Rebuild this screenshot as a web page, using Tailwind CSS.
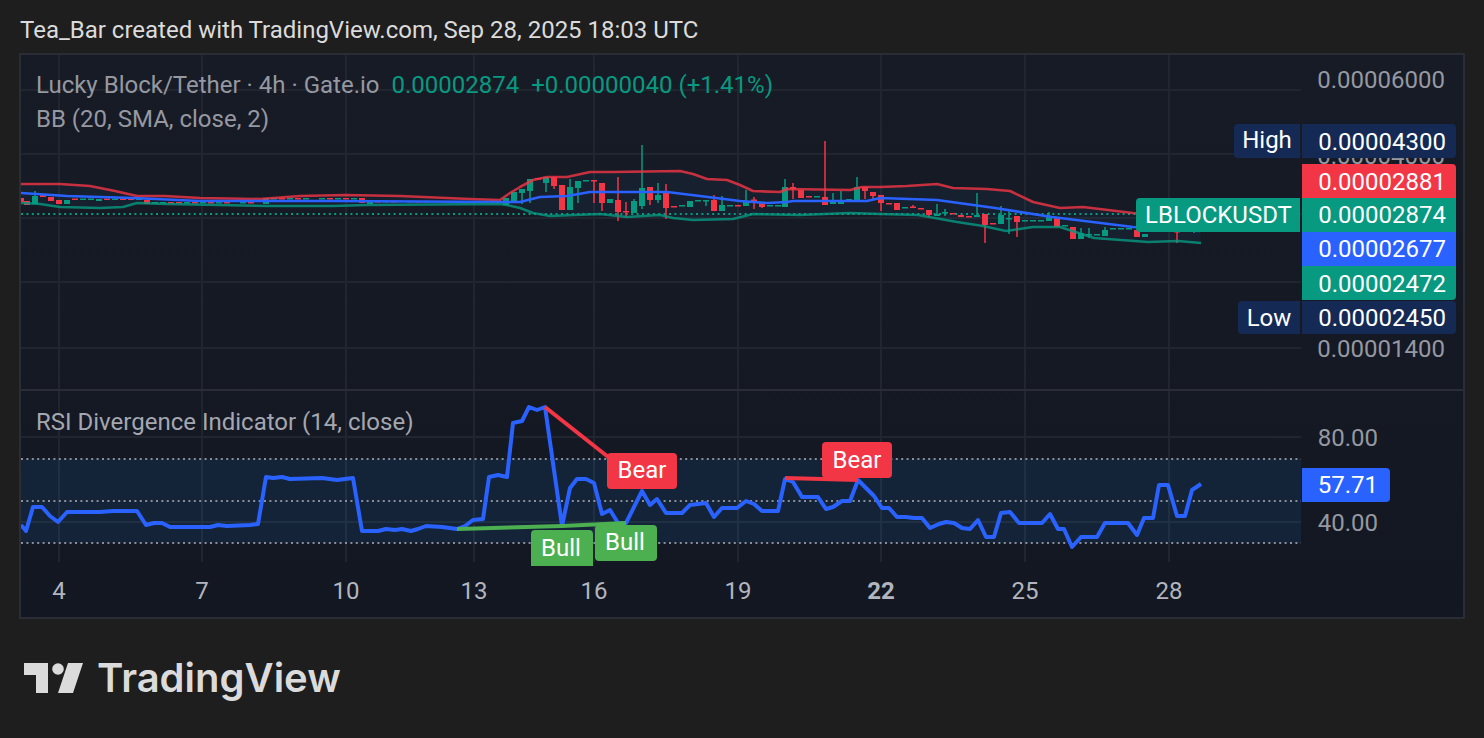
<!DOCTYPE html>
<html lang="en">
<head>
    <meta charset="utf-8"/>
    <title>LBLOCKUSDT chart</title>
    <script src="https://cdn.jsdelivr.net/npm/@tailwindcss/browser@4"></script>
</head>
<body class="bg-[#1e1e1e] w-[1484px] h-[738px] overflow-hidden font-['Roboto',sans-serif]">
    <!-- header -->
    <div class="h-[53px] pl-5 pt-[14px] text-[24px] leading-[33px] text-[#dbdbdb]">Tea_Bar created with TradingView.com, Sep 28, 2025 18:03 UTC</div>

    <!-- chart frame -->
    <div class="relative ml-[19px] w-[1446px] h-[566px] border-2 border-[#2a2d36] bg-linear-to-b from-[#171b26] to-[#131722] overflow-hidden text-[24px] leading-[34px]">
        <svg id="chart" class="absolute inset-0" width="1442" height="562" viewBox="21 55 1442 562" fill="none">
            <!-- grid -->
            <path stroke="#21252f" stroke-width="2" d="M59 55V389M202 55V389M346 55V389M474 55V389M594 55V389M738 55V389M881 55V389M1025 55V389M1169 55V389M59 391V562M202 391V562M346 391V562M474 391V562M594 391V562M738 391V562M881 391V562M1025 391V562M1169 391V562M21 90H1301M21 154H1301M21 218H1301M21 282H1301M21 348H1301M21 437H1301M21 522H1301"/>
            <path stroke="#2a2d36" stroke-width="2" d="M21 390H1463"/>
            <!-- rsi band -->
            <rect x="21" y="459" width="1280" height="84" fill="#2196f3" fill-opacity="0.1"/>
            <path stroke="#8a8e99" stroke-width="2" stroke-dasharray="2 3.4" d="M21 459H1301M21 501H1301M21 543H1301"/>
            <!-- bollinger band fill -->
            <path id="bbfill" fill="#2196f3" fill-opacity="0.05"/>
            <path stroke="#089981" stroke-width="2" stroke-dasharray="2 3.4" d="M21 214H1301"/>
            <path id="green" fill="#089981"/>
            <path id="red" fill="#f23645"/>
            <path id="bbup" stroke="#f23645" stroke-opacity="0.8" stroke-width="2.6" stroke-linejoin="round"/>
            <path id="bbmid" stroke="#2962ff" stroke-width="2.6" stroke-linejoin="round"/>
            <path id="bblow" stroke="#089981" stroke-opacity="0.8" stroke-width="2.6" stroke-linejoin="round"/>
            <!-- rsi -->
            <path id="rsi" stroke="#2962ff" stroke-width="4" stroke-linejoin="round"/>
            <path stroke="#4caf50" stroke-width="4" d="M457 529L562 526L626 523"/>
            <path stroke="#f23645" stroke-width="4" d="M545 407L612 460M785 478L858 480"/>
        </svg>

        <!-- legend -->
        <div class="absolute left-[15px] top-[13px] whitespace-nowrap text-[#9598a1]">
            <span>Lucky Block/Tether · 4h · Gate.io</span>
            <span class="ml-[6px] text-[#089981]">0.00002874</span>
            <span class="ml-[6px] text-[#089981]">+0.00000040 (+1.41%)</span>
        </div>
        <div class="absolute left-[15px] top-[47px] text-[#9598a1]">BB (20, SMA, close, 2)</div>
        <div class="absolute left-[15px] top-[350px] text-[#a4a7b0]">RSI Divergence Indicator (14, close)</div>

        <!-- divergence labels -->
        <div class="absolute left-[586px] top-[398px] w-[70px] h-[36px] rounded bg-[#f23645] text-center text-white">Bear</div>
        <div class="absolute left-[801px] top-[387px] w-[70px] h-[36px] rounded bg-[#f23645] leading-[36px] text-center text-white">Bear</div>
        <div class="absolute left-[510px] top-[475px] w-[62px] h-[36px] rounded-t bg-[#4caf50] pr-[2px] leading-[36px] text-center text-white">Bull</div>
        <div class="absolute left-[574px] top-[470px] w-[62px] h-[36px] rounded bg-[#4caf50] pr-[2px] text-center text-white">Bull</div>

        <!-- price axis -->
        <div class="absolute right-[18px] top-[8px] text-[#9598a1]">0.00006000</div>
        <div class="absolute right-[18px] top-[84px] text-[#9598a1]">0.00004000</div>
        <div class="absolute right-[18px] top-[277px] text-[#9598a1]">0.00001400</div>
        <div class="absolute left-[1213px] top-[69px] w-[66px] h-[34px] rounded-l bg-[#142a55] leading-[32px] text-center text-white">High</div>
        <div class="absolute left-[1281px] top-[69px] w-[154px] h-[34px] rounded-r bg-[#142a55] pr-[10px] leading-[36px] text-right text-white">0.00004300</div>
        <div class="absolute left-[1281px] top-[109px] w-[154px] h-[34px] rounded-tr bg-[#f23645] pr-[10px] leading-[36px] text-right text-white">0.00002881</div>
        <div class="absolute left-[1115px] top-[143px] w-[164px] h-[34px] rounded-l bg-[#089981] pl-[1px] text-center text-white">LBLOCKUSDT</div>
        <div class="absolute left-[1281px] top-[143px] w-[154px] h-[34px] bg-[#089981] pr-[10px] text-right text-white">0.00002874</div>
        <div class="absolute left-[1281px] top-[177px] w-[154px] h-[34px] bg-[#2962ff] pr-[10px] text-right text-white">0.00002677</div>
        <div class="absolute left-[1281px] top-[211px] w-[154px] h-[34px] rounded-br bg-[#089981] pr-[10px] leading-[36px] text-right text-white">0.00002472</div>
        <div class="absolute left-[1217px] top-[246px] w-[62px] h-[33px] rounded-l bg-[#142a55] text-center text-white">Low</div>
        <div class="absolute left-[1281px] top-[246px] w-[154px] h-[33px] rounded-r bg-[#142a55] pr-[10px] text-right text-white">0.00002450</div>

        <!-- rsi axis -->
        <div class="absolute right-[85px] top-[366px] text-[#9598a1]">80.00</div>
        <div class="absolute right-[85px] top-[451px] text-[#9598a1]">40.00</div>
        <div class="absolute left-[1281px] top-[413px] w-[88px] h-[34px] rounded-r bg-[#2962ff] pr-[12px] text-right text-white">57.71</div>

        <!-- time axis -->
        <div class="absolute left-0 top-[519px] w-[1442px] h-[34px] text-[#b2b5be]">
            <span class="absolute left-[38px] -translate-x-1/2">4</span>
            <span class="absolute left-[181px] -translate-x-1/2">7</span>
            <span class="absolute left-[325px] -translate-x-1/2">10</span>
            <span class="absolute left-[453px] -translate-x-1/2">13</span>
            <span class="absolute left-[573px] -translate-x-1/2">16</span>
            <span class="absolute left-[717px] -translate-x-1/2">19</span>
            <span class="absolute left-[860px] -translate-x-1/2 font-bold">22</span>
            <span class="absolute left-[1004px] -translate-x-1/2">25</span>
            <span class="absolute left-[1148px] -translate-x-1/2">28</span>
        </div>
    </div>

    <!-- footer logo -->
    <div class="flex items-center pl-6 pt-[39px] gap-[14px]">
        <svg width="59" height="30" viewBox="24 662 59 30" fill="#dbdbdb">
            <path d="M24 662H48V692H36V674H24Z"/>
            <circle cx="58" cy="668" r="5.8"/>
            <path d="M68 662H83L73 692H58Z"/>
        </svg>
        <span class="font-['Inter',sans-serif] font-semibold text-[40px] leading-[40px] text-[#dbdbdb]">TradingView</span>
    </div>

    <script>
        // [x, body top, body bottom, wick top, wick bottom]
        const greens = [[35,196,204,191,204],[67,200,204],[83,198.5,200],[91,198.5,200],[99,199,201],[115,198.5,200],[139,198.5,200],[155,202,203.5],[163,202,203.5],[187,202,203.5],[203,202,203.5],[219,202,203.5],[243,202,203.5],[266,198,204],[274,198,199.5],[290,198,199.5],[306,198,199.5],[322,198,199.5],[338,198,199.5],[354,198,199.5],[370,201,204],[386,201,202.5],[410,201,202.5],[426,201,202.5],[450,201,202.5],[466,201,202.5],[490,201,202.5],[506,198,205],[514,192,201],[522,189,193,189,204],[530,179,191,179,203],[546,177,183,177,192],[570,187,210,179,210],[578,181,188,181,203],[586,180,181.5],[610,199,203],[634,201,213,199,213],[642,188,206,145,209],[658,195,200,183,203],[682,205,206.5],[690,201,207],[698,200,201.5],[706,200,201.5,200,206],[722,205,211,196,211],[730,205,206.5],[746,201,206,190,206],[770,205,206.5],[778,205,206.5],[785,187,207,179,207],[817,196,197.5],[833,202,204,193,204],[841,201,204,191,204],[849,199,200.5],[857,187,202,177,202],[905,207,208.5],[937,214,216,204,216],[945,212,213.5,209,216],[977,215,217,193,217],[1001,215,224,206,224],[1009,218,219.5,210,234],[1025,220,221.5],[1033,220,221.5],[1041,220,221.5],[1049,217,221,212,221],[1065,225,226.5],[1081,233,239,228,239],[1089,234,235.5,228,238],[1097,234,235.5],[1105,230,236,227,236],[1113,228,229.5],[1121,228,229.5],[1129,228,229.5],[1145,234,237],[1194,230,231.5,228,233]];
        const reds = [[21,198,202],[27,201,205],[43,195,197],[51,197,201],[59,200,204],[75,198.5,200],[107,198.5,200],[123,198.5,200],[131,198.5,200],[147,200,204],[171,202,203.5],[179,202,203.5],[195,202,203.5],[211,202,203.5],[227,202,203.5],[251,202,203.5],[282,198,199.5],[298,198,199.5],[330,198,199.5],[346,198,199.5],[362,198,203],[378,201,202.5],[394,201,202.5],[418,201,202.5],[442,201,202.5],[458,201,202.5],[474,201,202.5],[538,178,179.5],[554,177,186,177,189],[562,185,210],[594,180,181.5,180,203],[602,183,203,183,211],[618,200,212,177,221],[626,211,212.5,202,217],[650,187,200,187,205],[666,193,208,184,219],[674,206,207.5],[714,200,211,195,211],[738,205,206.5],[754,199.5,201,197,209],[762,203,207,203,208],[793,187,189,183,199],[801,190,198],[809,196,197.5],[825,197,205,141,205],[865,187,191,187,199],[873,192,196,192,199],[881,195,203,195,211],[889,203,204.5],[897,203,210],[913,206.5,208,205,208],[921,208,209.5],[929,210,215,210,217],[953,213,214.5],[961,215,217],[969,216,217.5],[985,214,225,214,243],[993,223,224.5],[1017,216,222,216,237],[1057,218,227],[1073,227,239],[1137,230,237],[1177,231,232.5,231,243]];

        const up = [[20,184],[60,184],[90,186],[115,191],[137,196],[165,196],[200,198],[260,199],[300,196],[345,195],[400,196],[470,199],[500,200],[510,193],[520,187],[533,180],[547,177],[567,177],[590,172],[613,172],[680,171],[693,174],[707,179],[727,180],[740,185],[753,191],[780,192],[787,189],[850,190],[862,187],[880,187],[907,186],[937,184],[953,188],[987,189],[1010,191],[1033,202],[1060,208],[1083,207],[1133,213],[1200,219]];
        const mid = [[20,193],[67,196],[133,198],[200,201],[333,201],[500,202],[520,202],[540,197],[567,196],[590,192],[667,192],[700,196],[740,201],[767,203],[787,202],[793,201],[867,201],[880,198],[937,200],[995,208],[1052,217],[1133,227],[1200,231]];
        const low = [[20,203],[40,204],[60,207],[100,208],[123,207],[137,203],[167,204],[267,206],[333,206],[367,205],[500,204],[507,205],[520,208],[533,213],[550,216],[600,214],[627,217],[660,215],[673,218],[693,220],[733,219],[753,214],[800,215],[850,213],[880,214],[918,215],[957,222],[983,226],[1006,231],[1033,227],[1060,227],[1094,238],[1148,242],[1178,241],[1201,243]];
        const rsi = [[21,525],[26,531],[33,507],[42,507],[50,516],[58,522],[67,512],[100,512],[113,511],[137,511],[146,525],[154,523],[162,523],[170,527],[210,527],[218,525],[227,526],[250,525],[258,524],[266,477],[273,478],[282,477],[290,479],[322,478],[337,480],[353,478],[362,531],[378,531],[386,529],[395,530],[402,529],[411,531],[418,529],[426,526],[442,527],[457,529],[465,526],[473,520],[483,519],[489,477],[498,475],[507,477],[513,423],[522,421],[529,407],[537,410],[545,407],[562,526],[570,488],[577,479],[586,479],[594,483],[602,514],[610,510],[618,523],[626,523],[642,491],[650,505],[657,499],[666,513],[682,513],[690,505],[706,503],[714,517],[722,508],[737,508],[746,501],[754,504],[762,511],[778,511],[785,479],[793,482],[802,497],[818,497],[826,509],[833,507],[842,501],[850,501],[858,480],[866,488],[874,496],[882,508],[889,508],[897,517],[906,517],[914,518],[922,518],[930,528],[939,524],[946,522],[954,523],[962,528],[970,529],[978,520],[986,537],[994,537],[1001,513],[1010,512],[1019,523],[1042,523],[1050,514],[1058,529],[1064,529],[1072,547],[1081,537],[1097,537],[1105,523],[1128,523],[1137,535],[1144,518],[1153,518],[1159,485],[1168,485],[1177,516],[1185,516],[1192,490],[1201,484]];

        const line = pts => 'M' + pts.map(p => p.join(' ')).join('L');
        const candles = list => list.map(([x, t, b, wt, wb]) =>
            `M${x - 3} ${t}h6V${b}h-6Z` + (wt ? `M${x - 0.75} ${wt}h1.5V${wb}h-1.5Z` : '')).join('');

        document.getElementById('green').setAttribute('d', candles(greens));
        document.getElementById('red').setAttribute('d', candles(reds));
        document.getElementById('bbup').setAttribute('d', line(up));
        document.getElementById('bbmid').setAttribute('d', line(mid));
        document.getElementById('bblow').setAttribute('d', line(low));
        document.getElementById('bbfill').setAttribute('d', line(up) + 'L' + low.slice().reverse().map(p => p.join(' ')).join('L') + 'Z');
        document.getElementById('rsi').setAttribute('d', line(rsi));
    </script>
</body>
</html>
